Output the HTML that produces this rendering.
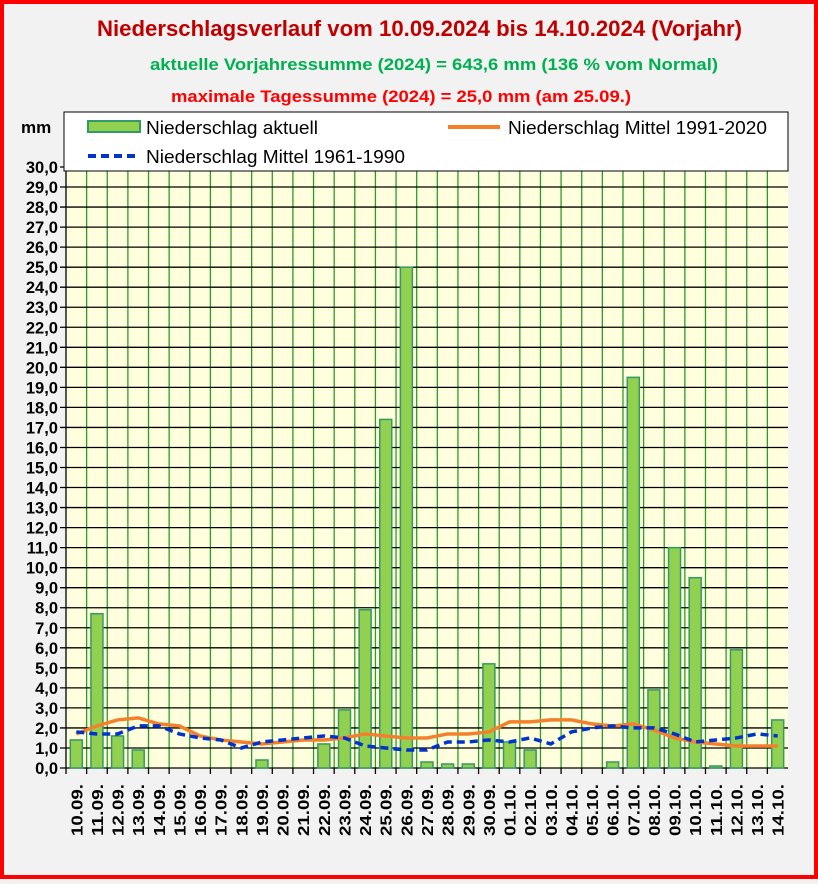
<!DOCTYPE html>
<html><head><meta charset="utf-8"><style>
html,body{margin:0;padding:0}
body{width:818px;height:879px;overflow:hidden;background:#f2f2f2}
</style></head><body>
<svg width="818" height="879" xmlns="http://www.w3.org/2000/svg" font-family="Liberation Sans, sans-serif">
<rect x="2" y="2" width="814" height="875" fill="#f2f2f2" stroke="#ff0000" stroke-width="4"/>
<text x="97" y="36" textLength="645" lengthAdjust="spacingAndGlyphs" font-size="22" font-weight="bold" fill="#c00000">Niederschlagsverlauf vom 10.09.2024 bis 14.10.2024 (Vorjahr)</text>
<text x="150" y="70" textLength="568" lengthAdjust="spacingAndGlyphs" font-size="17" font-weight="bold" fill="#00b050">aktuelle Vorjahressumme (2024) = 643,6 mm (136 % vom Normal)</text>
<text x="171" y="102" textLength="460" lengthAdjust="spacingAndGlyphs" font-size="17" font-weight="bold" fill="#ff0000">maximale Tagessumme (2024) = 25,0 mm (am 25.09.)</text>
<text x="21" y="133" font-size="17" font-weight="bold" fill="#000">mm</text>
<rect x="66" y="167" width="722" height="601" fill="#ffffdd"/>
<g id="g"></g>
<rect x="64" y="112" width="724" height="59" fill="#fff" stroke="#000" stroke-width="1"/>
<rect x="88" y="121" width="52" height="11" fill="#92d050" stroke="#339966" stroke-width="2"/>
<text x="146" y="134" textLength="172" lengthAdjust="spacingAndGlyphs" font-size="18" fill="#000">Niederschlag aktuell</text>
<line x1="448" y1="127" x2="500" y2="127" stroke="#f4802c" stroke-width="4"/>
<text x="508" y="134" textLength="259" lengthAdjust="spacingAndGlyphs" font-size="18" fill="#000">Niederschlag Mittel 1991-2020</text>
<line x1="88" y1="156" x2="140" y2="156" stroke="#0033cc" stroke-width="4" stroke-dasharray="8,5"/>
<text x="146" y="163" textLength="259" lengthAdjust="spacingAndGlyphs" font-size="18" fill="#000">Niederschlag Mittel 1961-1990</text>
</svg>
<script>
const g=document.getElementById('g');
let h='';const X0=66,X1=788,Y0=768,Y1=167,n=35,dw=(X1-X0)/n,dy=(Y0-Y1)/30;
for(let i=1;i<n;i++){const x=X0+i*dw;h+=`<line x1="${x}" y1="${Y1}" x2="${x}" y2="${Y0}" stroke="#2e9a2e" stroke-width="1.3"/>`;}
for(let v=0;v<=30;v++){const y=Y0-v*dy;h+=`<line x1="60" y1="${y}" x2="${X1}" y2="${y}" stroke="#000" stroke-width="1.3"/>`;
h+=`<text x="58" y="${y+6}" text-anchor="end" font-size="16.5" font-weight="bold">${v.toFixed(1).replace('.',',')}</text>`;}
h+=`<line x1="${X0}" y1="${Y1}" x2="${X0}" y2="${Y0}" stroke="#000" stroke-width="1.3"/>`;
const d=[1.4,7.7,1.6,0.9,0,0,0,0,0,0.4,0,0,1.2,2.9,7.9,17.4,25.0,0.3,0.2,0.2,5.2,1.3,0.9,0,0,0,0.3,19.5,3.9,11.0,9.5,0.1,5.9,0,2.4];
const o=[1.7,2.1,2.4,2.5,2.2,2.1,1.6,1.4,1.3,1.2,1.3,1.4,1.4,1.5,1.7,1.6,1.5,1.5,1.7,1.7,1.8,2.3,2.3,2.4,2.4,2.2,2.1,2.2,1.9,1.5,1.3,1.2,1.1,1.1,1.1];
const b=[1.8,1.7,1.7,2.1,2.1,1.7,1.5,1.4,1.0,1.3,1.4,1.5,1.6,1.5,1.1,1.0,0.9,0.9,1.3,1.3,1.4,1.3,1.5,1.2,1.8,2.0,2.1,2.0,2.0,1.7,1.3,1.4,1.5,1.7,1.6];
const days=[];for(let i=10;i<=30;i++)days.push(String(i).padStart(2,'0')+'.09.');for(let i=1;i<=14;i++)days.push(String(i).padStart(2,'0')+'.10.');
for(let i=0;i<n;i++){const x=X0+i*dw;h+=`<line x1="${x}" y1="${Y0}" x2="${x}" y2="${Y0+6}" stroke="#000" stroke-width="1.3"/>`;
if(d[i]>0){const bh=d[i]*dy;h+=`<rect x="${x+dw/2-6}" y="${Y0-bh}" width="12" height="${bh}" fill="#92d050" stroke="#339966" stroke-width="1.5"/>`;}
h+=`<text transform="translate(${x+dw/2+6},836) rotate(-90)" textLength="52" lengthAdjust="spacingAndGlyphs" font-size="16" font-weight="bold">${days[i]}</text>`;}
const pts=a=>a.map((v,i)=>`${X0+(i+0.5)*dw},${Y0-v*dy}`).join(' ');
h+=`<polyline points="${pts(o)}" fill="none" stroke="#f4802c" stroke-width="3.5"/>`;
h+=`<polyline points="${pts(b)}" fill="none" stroke="#0033cc" stroke-width="3.5" stroke-dasharray="8,5"/>`;
g.innerHTML=h;
</script>
</body></html>
